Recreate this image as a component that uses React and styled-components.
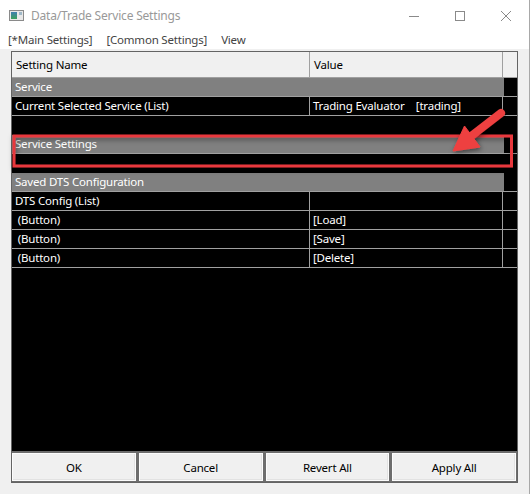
import React from "react";
import styled, { createGlobalStyle } from "styled-components";

const GlobalStyle = createGlobalStyle`
  html, body {
    margin: 0;
    padding: 0;
    background: #f0f0f0;
  }
  * {
    box-sizing: border-box;
  }
`;

const FONT = `"Noto Sans", "Liberation Sans", Arial, sans-serif`;

const Window = styled.div`
  position: relative;
  width: 530px;
  height: 494px;
  display: flex;
  flex-direction: column;
  background: #f0f0f0;
  font-family: ${FONT};
  font-size: 11.5px;
  letter-spacing: -0.2px;
  overflow: hidden;
  border-right: 1px solid #a8a8a8;
`;

const TitleBar = styled.div`
  height: 31px;
  display: flex;
  align-items: center;
  background: #fff;
  padding-left: 9px;
`;

const Title = styled.span`
  margin-left: 7px;
  color: #999;
  font-size: 12px;
  flex: 1;
`;

const Controls = styled.div`
  display: flex;
  height: 100%;
`;

const ControlButton = styled.div`
  width: 46px;
  height: 100%;
  display: flex;
  align-items: center;
  justify-content: center;
`;

const MenuBar = styled.div`
  height: 18px;
  display: flex;
  align-items: center;
  gap: 14px;
  padding-left: 8px;
  background: #fff;
  color: #444;
`;

const MenuItem = styled.span`
  line-height: 18px;
`;

const Body = styled.div`
  flex: 1;
  padding: 2px 11px 11px 11px;
  display: flex;
`;

const Grid = styled.div`
  flex: 1;
  display: flex;
  flex-direction: column;
  border: 1px solid #646464;
  background: #000;
`;

const HeaderRow = styled.div`
  display: flex;
  height: 26px;
  background: #f0f0f0;
  border-bottom: 1px solid #a0a0a0;
  color: #000;
`;

const HeaderCell = styled.div`
  width: ${(p) => (p.$w ? `${p.$w}px` : "auto")};
  flex: ${(p) => (p.$w ? "none" : 1)};
  padding-left: 4px;
  line-height: 25px;
  border-right: ${(p) => (p.$last ? "none" : "1px solid #a0a0a0")};
`;

const Row = styled.div`
  display: flex;
  height: 19px;
  border-bottom: ${(p) => (p.$blank ? "none" : "1px solid #a0a0a0")};
  color: #fff;
`;

const Cell = styled.div`
  width: ${(p) => (p.$w ? `${p.$w}px` : "auto")};
  flex: ${(p) => (p.$w ? "none" : 1)};
  padding-left: 3px;
  line-height: 18px;
  white-space: pre;
  overflow: hidden;
  background: ${(p) => (p.$cat ? "#808080" : "#000")};
  border-right: ${(p) => (p.$div ? "1px solid #a0a0a0" : "none")};
`;

const Filler = styled.div`
  flex: 1;
  background: #000;
`;

const ButtonBar = styled.div`
  display: flex;
  gap: 3px;
  padding: 2px 1px 1px 0;
  background: #6d6d6d;
`;

const Button = styled.div`
  flex: 1;
  height: 28px;
  display: flex;
  align-items: center;
  justify-content: center;
  background: #f0f0f0;
  border: 1px solid #fcfcfc;
  box-shadow: inset -1px -1px 0 #e2e2e2;
  color: #000;
`;

const Annotation = styled.svg`
  position: absolute;
  left: 0;
  top: 0;
  pointer-events: none;
`;

const AppIcon = () => (
  <svg width="15" height="11" viewBox="0 0 15 11">
    <defs>
      <linearGradient id="ico" x1="0" y1="0" x2="0" y2="1">
        <stop offset="0" stopColor="#3f7fb0" />
        <stop offset="1" stopColor="#3aa15a" />
      </linearGradient>
    </defs>
    <rect x="0.5" y="0.5" width="14" height="10" fill="#e8e8e8" stroke="#8a8a8a" />
    <rect x="2" y="2" width="6" height="7" fill="url(#ico)" />
    <rect x="10" y="2" width="3" height="3" fill="#9fb8c8" />
  </svg>
);

const DataRow = ({ name, value }) => (
  <Row>
    <Cell $w={298} $div>
      {name}
    </Cell>
    <Cell $w={193} $div>
      {value}
    </Cell>
    <Cell />
  </Row>
);

const CategoryRow = ({ label }) => (
  <Row>
    <Cell $w={492} $cat>
      {label}
    </Cell>
    <Cell />
  </Row>
);

const App = () => {
  return (
    <Window>
      <GlobalStyle />
      <TitleBar>
        <AppIcon />
        <Title>Data/Trade Service Settings</Title>
        <Controls>
          <ControlButton>
            <svg width="10" height="10" viewBox="0 0 10 10">
              <line x1="0" y1="5.5" x2="10" y2="5.5" stroke="#8a8a8a" />
            </svg>
          </ControlButton>
          <ControlButton>
            <svg width="10" height="10" viewBox="0 0 10 10">
              <rect x="0.5" y="0.5" width="9" height="9" fill="none" stroke="#8a8a8a" />
            </svg>
          </ControlButton>
          <ControlButton>
            <svg width="10" height="10" viewBox="0 0 10 10">
              <path d="M0 0 L10 10 M10 0 L0 10" stroke="#8a8a8a" />
            </svg>
          </ControlButton>
        </Controls>
      </TitleBar>
      <MenuBar>
        <MenuItem>[*Main Settings]</MenuItem>
        <MenuItem>[Common Settings]</MenuItem>
        <MenuItem>View</MenuItem>
      </MenuBar>
      <Body>
        <Grid>
          <HeaderRow>
            <HeaderCell $w={298}>Setting Name</HeaderCell>
            <HeaderCell $w={193}>Value</HeaderCell>
            <HeaderCell $last />
          </HeaderRow>
          <CategoryRow label="Service" />
          <DataRow
            name="Current Selected Service (List)"
            value="Trading Evaluator    [trading]"
          />
          <Row $blank />
          <CategoryRow label="Service Settings" />
          <Row $blank />
          <CategoryRow label="Saved DTS Configuration" />
          <DataRow name="DTS Config (List)" value="" />
          <DataRow name=" (Button)" value="[Load]" />
          <DataRow name=" (Button)" value="[Save]" />
          <DataRow name=" (Button)" value="[Delete]" />
          <Filler />
          <ButtonBar>
            <Button>OK</Button>
            <Button>Cancel</Button>
            <Button>Revert All</Button>
            <Button>Apply All</Button>
          </ButtonBar>
        </Grid>
      </Body>
      <Annotation width="530" height="494" viewBox="0 0 530 494">
        <defs>
          <filter id="shadow" x="-10%" y="-50%" width="120%" height="200%">
            <feDropShadow dx="1" dy="2" stdDeviation="2.5" floodColor="#000" floodOpacity="0.5" />
          </filter>
        </defs>
        <rect
          x="14"
          y="136"
          width="497.5"
          height="30"
          fill="none"
          stroke="#e8393e"
          strokeWidth="3"
          filter="url(#shadow)"
        />
        <g filter="url(#shadow)" fill="#ee4040" stroke="#ee4040">
          <line x1="501" y1="113" x2="470" y2="137" strokeWidth="8" strokeLinecap="round" />
          <polygon points="453,151 464.5,126 480,147" strokeWidth="1" strokeLinejoin="round" />
        </g>
      </Annotation>
    </Window>
  );
};

export default App;
